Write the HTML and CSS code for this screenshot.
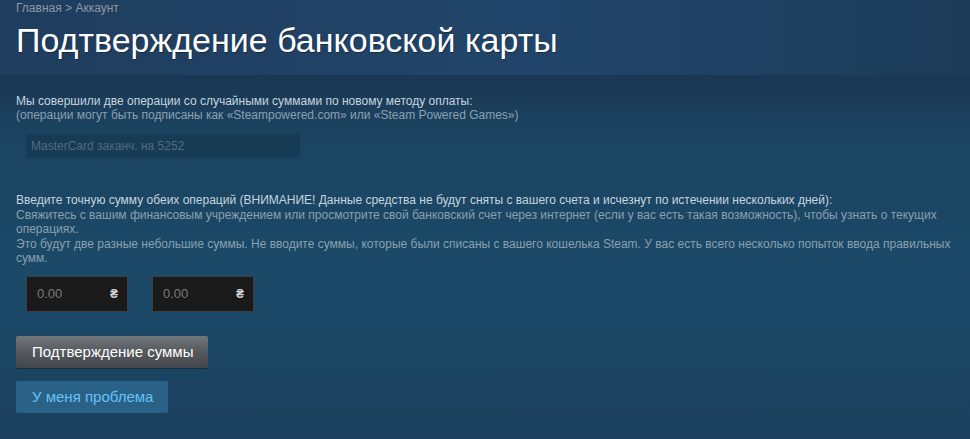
FILE: index.html
```html
<!DOCTYPE html>
<html lang="ru">
<head>
  <meta charset="UTF-8" />
  <meta name="viewport" content="width=device-width, initial-scale=1" />
  <title>Подтверждение банковской карты</title>
  <link rel="stylesheet" href="styles.css">
</head>
<body>

<header class="cabecera">
  <div class="migas"><a href="#">Главная</a> &gt; <a href="#">Аккаунт</a></div>
  <h1>Подтверждение банковской карты</h1>
</header>

<main class="panel">
  <p class="aviso">
    <span class="claro">Мы совершили две операции со случайными суммами по новому методу оплаты:</span><br>
    (операции могут быть подписаны как «Steampowered.com» или «Steam Powered Games»)
  </p>

  <div class="tarjeta">MasterCard заканч. на 5252</div>

  <p class="aviso instrucciones">
    <span class="claro">Введите точную сумму обеих операций (ВНИМАНИЕ! Данные средства не будут сняты с вашего счета и исчезнут по истечении нескольких дней):</span><br>
    Свяжитесь с вашим финансовым учреждением или просмотрите свой банковский счет через интернет (если у вас есть такая возможность), чтобы узнать о текущих операциях.<br>
    Это будут две разные небольшие суммы. Не вводите суммы, которые были списаны с вашего кошелька Steam. У вас есть всего несколько попыток ввода правильных сумм.
  </p>

  <div class="importes">
    <label class="importe"><input type="text" placeholder="0.00"><span>₴</span></label>
    <label class="importe"><input type="text" placeholder="0.00"><span>₴</span></label>
  </div>

  <div class="acciones">
    <button class="btn-gris">Подтверждение суммы</button>
    <button class="btn-azul">У меня проблема</button>
  </div>
</main>

</body>
</html>
```

FILE: styles.css
```css
body {
  margin: 0; font-family: "Liberation Sans", Arial, sans-serif; color: #acb2b8;
  background: #1b3f5d; height: 100vh; overflow: hidden;
  display: flex; flex-direction: column;
}
.cabecera {
  background: linear-gradient(90deg, #1f3d5e 0%, #21456a 55%, #1c3b59 100%);
  padding: 1px 16px 14px;
}
.migas {
  font-size: 12px; color: #8f98a0; margin-top: 0; line-height: 14px;
}
.migas a { color: #8f98a0; text-decoration: none; }
h1 {
  margin: 4px 0 0; font-size: 34px; font-weight: 400; color: #fff; line-height: 42px;
  text-shadow: 1px 1px 0 rgba(0,0,0,0.35);
}
.panel {
  flex: 1;
  background: linear-gradient(180deg, #1a3754 0px, #1b4461 60px, #1b4a68 220px, #1b3f5d 364px);
  padding: 19px 16px 0;
}
.aviso {
  margin: 0; font-size: 12px; line-height: 14px; color: #8aa0b0;
}
.claro { color: #c6d4df; }
.tarjeta {
  margin: 12px 0 0 10px; width: 274px; height: 24px; padding: 0 0 0 5px;
  background: rgba(0,0,0,0.12); color: #4f6a7e; font-size: 12px; line-height: 24px;
  box-sizing: border-box;
}
.instrucciones { margin-top: 35px; line-height: 14.5px; }
.importes {
  display: flex; gap: 24px; margin: 10px 0 0 10px;
}
.importe {
  display: flex; align-items: center; width: 100px; height: 34px;
  background: #1a1a1a; border: 1px solid #3d4043;
}
.importe input {
  flex: 1; min-width: 0; background: transparent; border: none; outline: none;
  color: #c6d4df; font: 13px "Liberation Sans", Arial, sans-serif; padding: 0 0 0 10px;
}
.importe input::placeholder { color: #7a7a7a; }
.importe span { color: #d0d0d0; font-size: 12px; margin-right: 9px; font-weight: 700; }
.acciones {
  display: flex; flex-direction: column; align-items: flex-start; gap: 13px; margin-top: 24px;
}
.acciones button {
  font: 15px "Liberation Sans", Arial, sans-serif; border: none; border-radius: 2px;
  cursor: pointer; height: 32px; padding: 0 16px; white-space: nowrap; box-sizing: border-box;
}
.btn-gris {
  background: linear-gradient(180deg, #72777c 0%, #55595e 50%, #43474b 100%);
  color: #fff; width: 192px; box-shadow: 0 1px 0 rgba(0,0,0,0.3);
}
.btn-azul {
  background: #2a6287; color: #67c1f5; width: 152px;
}
```
